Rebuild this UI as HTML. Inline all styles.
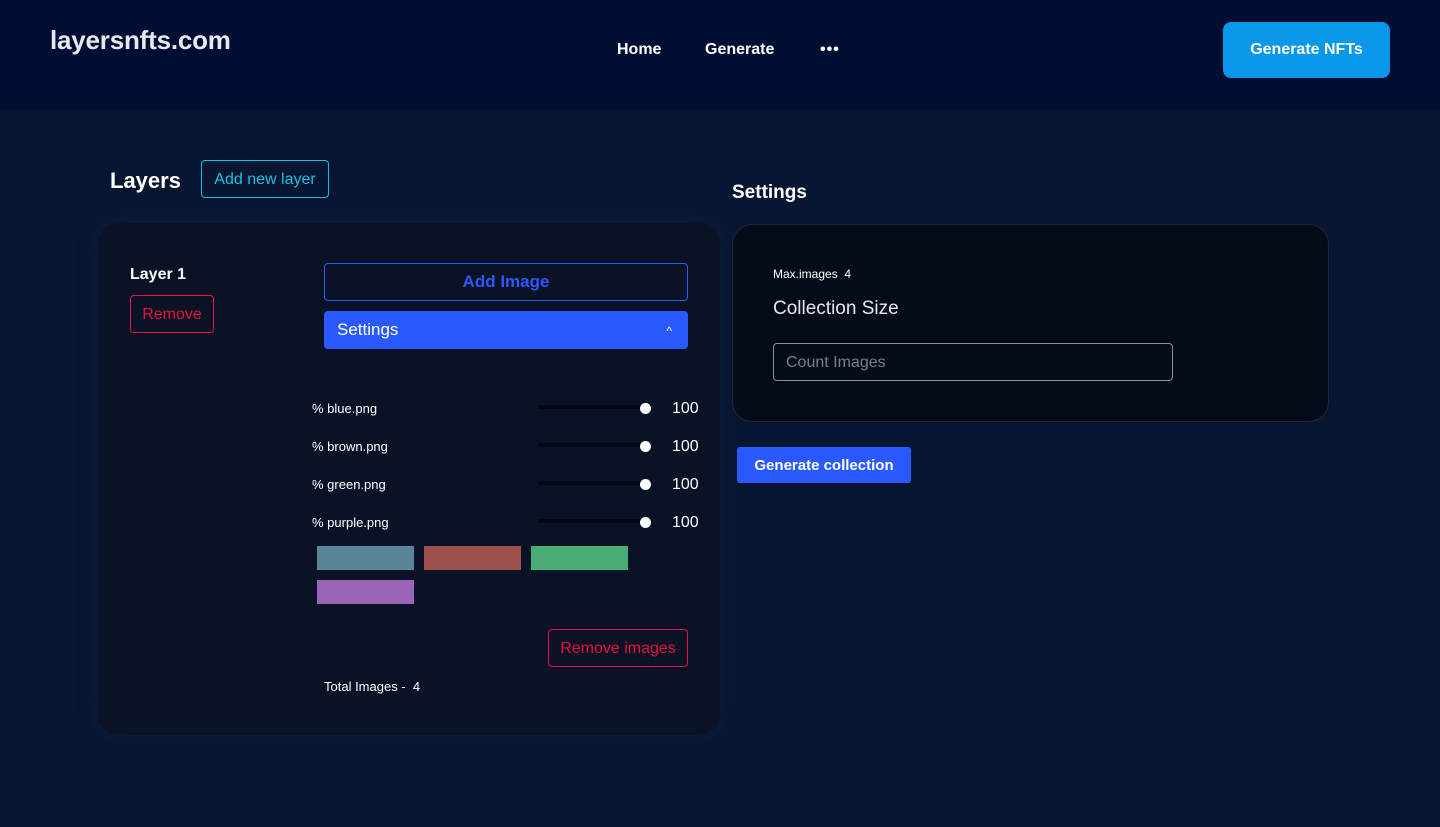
<!DOCTYPE html>
<html><head><meta charset="utf-8"><style>
*{box-sizing:border-box;margin:0;padding:0}
body{width:1440px;height:827px;overflow:hidden;background:#091631;font-family:"Liberation Sans",sans-serif;color:#fff;position:relative}
.hdr{position:absolute;left:0;top:0;width:1440px;height:110px;background:#000e33}
.logo{position:absolute;left:50px;top:25px;font-size:26px;font-weight:bold;color:#e8e8ee;letter-spacing:-0.2px}
.nav{position:absolute;top:41px;font-size:16px;font-weight:bold}
.gbtn{position:absolute;left:1223px;top:22px;width:167px;height:56px;background:#0897e9;border-radius:8px;font-size:16px;font-weight:bold;text-align:center;line-height:56px}
.abs{position:absolute}
.card{position:absolute;left:98px;top:223px;width:622px;height:512px;background:#0a1326;border-radius:20px;box-shadow:0 0 20px rgba(20,40,90,.45)}
.scard{position:absolute;left:732px;top:224px;width:597px;height:198px;background:#050c19;border:1px solid #1e2638;border-radius:20px}
.row{position:absolute;left:312px;font-size:13px}
.track{position:absolute;left:538px;width:108px;height:4px;background:#020814;border-radius:2px}
.dot{position:absolute;left:640px;width:11px;height:11px;border-radius:50%;background:#fff}
.val{position:absolute;left:672px;font-size:16px}
.sw{position:absolute;width:97px;height:24px}
</style></head><body>
<div class="hdr">
<div class="logo">layersnfts.com</div>
<div class="nav" style="left:617px">Home</div>
<div class="nav" style="left:705px">Generate</div>
<div class="nav" style="left:820px;top:41px;letter-spacing:1px">•••</div>
<div class="gbtn" style="line-height:55px">Generate NFTs</div>
</div>
<div class="abs" style="left:110px;top:168px;font-size:22px;font-weight:bold">Layers</div>
<div class="abs" style="left:201px;top:160px;width:128px;height:38px;border:1px solid #14c3e6;border-radius:4px;color:#14c3e6;font-size:16px;text-align:center;line-height:37px">Add new layer</div>
<div class="abs" style="left:732px;top:182px;font-size:19px;font-weight:bold">Settings</div>

<div class="card"></div>
<div class="abs" style="left:130px;top:266px;font-size:16px;font-weight:bold">Layer 1</div>
<div class="abs" style="left:130px;top:295px;width:84px;height:38px;border:1px solid #e8123a;border-radius:4px;color:#e8123a;font-size:16px;text-align:center;line-height:38px">Remove</div>
<div class="abs" style="left:324px;top:263px;width:364px;height:38px;border:1px solid #2a5aff;border-radius:4px;color:#2a5aff;font-size:17px;font-weight:bold;text-align:center;line-height:36px">Add Image</div>
<div class="abs" style="left:324px;top:311px;width:364px;height:38px;background:#2a5aff;border-radius:4px;font-size:17px;line-height:38px;padding-left:13px">Settings<span style="position:absolute;right:16px;top:1px;font-size:12px">^</span></div>

<div class="row" style="top:401px">% blue.png</div>
<div class="track" style="top:405px"></div><div class="dot" style="top:403px"></div><div class="val" style="top:400px">100</div>
<div class="row" style="top:439px">% brown.png</div>
<div class="track" style="top:443px"></div><div class="dot" style="top:441px"></div><div class="val" style="top:438px">100</div>
<div class="row" style="top:477px">% green.png</div>
<div class="track" style="top:481px"></div><div class="dot" style="top:479px"></div><div class="val" style="top:476px">100</div>
<div class="row" style="top:515px">% purple.png</div>
<div class="track" style="top:519px"></div><div class="dot" style="top:517px"></div><div class="val" style="top:514px">100</div>

<div class="sw" style="left:317px;top:546px;background:#5a8499"></div>
<div class="sw" style="left:424px;top:546px;background:#9e504c"></div>
<div class="sw" style="left:531px;top:546px;background:#48ad72"></div>
<div class="sw" style="left:317px;top:580px;background:#9a65b7"></div>

<div class="abs" style="left:548px;top:629px;width:140px;height:38px;border:1px solid #e8123a;border-radius:4px;color:#e8123a;font-size:16px;text-align:center;line-height:38px">Remove images</div>
<div class="abs" style="left:324px;top:679px;font-size:13px">Total Images - &nbsp;4</div>

<div class="scard"></div>
<div class="abs" style="left:773px;top:267px;font-size:12px">Max.images &nbsp;4</div>
<div class="abs" style="left:773px;top:298px;font-size:19px;color:#e6e8ee">Collection Size</div>
<div class="abs" style="left:773px;top:343px;width:400px;height:38px;border:1px solid #8a8f98;border-radius:4px;color:#7a808a;font-size:16px;line-height:38px;padding-left:12px">Count Images</div>
<div class="abs" style="left:737px;top:447px;width:174px;height:36px;background:#2a5aff;border-radius:3px;font-size:15px;font-weight:bold;text-align:center;line-height:37px">Generate collection</div>
</body></html>
